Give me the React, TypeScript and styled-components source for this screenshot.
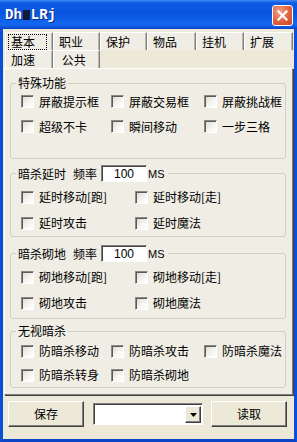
import React from 'react'
import styled, { createGlobalStyle } from 'styled-components'

const GlobalStyle = createGlobalStyle`
  html, body {
    margin: 0;
    padding: 0;
    background: #ece9d8;
  }
  body {
    font-family: 'Noto Sans CJK SC', 'Noto Sans', sans-serif;
    font-size: 12px;
    color: #000;
  }
`

const Window = styled.div`
  width: 297px;
  height: 442px;
  display: flex;
  flex-direction: column;
  overflow: hidden;
`

const TitleBar = styled.div`
  height: 29px;
  flex: none;
  display: flex;
  align-items: center;
  justify-content: space-between;
  padding: 0 4px 0 5px;
  box-sizing: border-box;
  background: linear-gradient(
    to bottom,
    #3d8bf5 0%,
    #0f5ae3 10%,
    #0a55e0 45%,
    #1468ef 85%,
    #0c52d8 95%,
    #0841c4 100%
  );
`

const Title = styled.span`
  font-family: 'Liberation Mono', 'DejaVu Sans Mono', monospace;
  font-weight: bold;
  font-size: 14px;
  color: #fff;
  text-shadow: 1px 1px #0a2a8a;
  display: flex;
  align-items: center;
`

const Redacted = styled.span`
  display: inline-block;
  width: 7px;
  height: 10px;
  margin: 0 1px;
  background: #111a3a;
`

const CloseButton = styled.div`
  width: 21px;
  height: 21px;
  box-sizing: border-box;
  border: 1px solid #fff;
  border-radius: 3px;
  background: radial-gradient(circle at 35% 30%, #f2a288 0%, #e1603e 55%, #c84520 100%);
  display: flex;
  align-items: center;
  justify-content: center;
  margin-top: 1px;
`

const Frame = styled.div`
  flex: 1;
  display: flex;
  flex-direction: column;
  background: #ece9d8;
  border-left: 3px solid #0b4fd8;
  border-right: 3px solid #0b4fd8;
  border-bottom: 3px solid #0b45c8;
  padding: 3px 0 0 1px;
`

const TabRow = styled.div<{ $cols: string }>`
  display: grid;
  grid-template-columns: ${(p) => p.$cols};
  height: 18px;
  margin-left: 1px;
`

const Tab = styled.div<{ $focus?: boolean }>`
  box-sizing: border-box;
  border-top: 1px solid #fff;
  border-left: 1px solid #fff;
  border-right: 1px solid #808080;
  box-shadow: inset -1px 0 #b8b6a8;
  background: #efede4;
  display: flex;
  align-items: center;
  padding-left: ${(p) => (p.$focus ? '2px' : '5px')};
  line-height: 12px;
`

const FocusRect = styled.span`
  border: 1px dotted #000;
  padding: 1px 3px 1px 2px;
  width: 39px;
  box-sizing: border-box;
`

const Panel = styled.div`
  box-sizing: border-box;
  width: 289px;
  background: #efede4;
  border-top: 1px solid #fff;
  border-left: 1px solid #fff;
  border-right: 1px solid #808080;
  border-bottom: 1px solid #808080;
  box-shadow: 1px 1px #404040;
  padding: 8px 6px 6px 5px;
  display: flex;
  flex-direction: column;
`

const Group = styled.fieldset<{ $gap: number; $pt: number; $pb: number }>`
  margin: ${(p) => p.$gap}px 0 0 0;
  padding: ${(p) => p.$pt}px 0 ${(p) => p.$pb}px 0;
  border: 1px solid #d0d0bf;
  border-radius: 3px;
  min-width: 0;
`

const Legend = styled.legend`
  margin-left: 5px;
  padding: 0 2px;
  line-height: 12px;
`

const LegendRow = styled.span`
  display: inline-flex;
  align-items: center;
`

const Spacer = styled.span`
  width: 7px;
`

const FreqInput = styled.span`
  width: 46px;
  height: 17px;
  box-sizing: border-box;
  margin: 0 1px 0 4px;
  background: #fff;
  border-top: 1px solid #808080;
  border-left: 1px solid #808080;
  border-right: 1px solid #fff;
  border-bottom: 1px solid #fff;
  box-shadow: inset 1px 1px #404040;
  display: flex;
  align-items: center;
  justify-content: center;
  font-family: 'Liberation Sans', sans-serif;
  font-size: 12px;
`

const Ms = styled.span`
  font-family: 'Liberation Sans', sans-serif;
  font-size: 11px;
  padding-right: 1px;
`

const CheckGrid = styled.div<{ $cols: string; $row: number }>`
  display: grid;
  grid-template-columns: ${(p) => p.$cols};
  grid-auto-rows: ${(p) => p.$row}px;
  padding-left: 10px;
`

const CheckItem = styled.label`
  display: flex;
  align-items: center;
  gap: 5px;
  white-space: nowrap;
  line-height: 12px;
`

const Box = styled.span`
  flex: none;
  width: 13px;
  height: 13px;
  box-sizing: border-box;
  border-top: 1px solid #8a8a84;
  border-left: 1px solid #8a8a84;
  border-right: 1px solid #fff;
  border-bottom: 1px solid #fff;
  box-shadow: inset 1px 1px #5a5a5a;
  background: linear-gradient(135deg, #dcd9ce 0%, #f4f3ee 55%, #fff 100%);
`

const Footer = styled.div`
  display: flex;
  align-items: center;
  padding: 6px 0 0 4px;
`

const Button = styled.div`
  width: 76px;
  height: 26px;
  box-sizing: border-box;
  background: #ece9d8;
  border-top: 1px solid #fff;
  border-left: 1px solid #fff;
  border-right: 1px solid #404040;
  border-bottom: 1px solid #404040;
  box-shadow: inset -1px -1px #808080;
  display: flex;
  align-items: center;
  justify-content: center;
  line-height: 12px;
`

const Combo = styled.div`
  width: 110px;
  height: 22px;
  box-sizing: border-box;
  margin: 0 8px 0 9px;
  background: #fff;
  border-top: 1px solid #808080;
  border-left: 1px solid #808080;
  border-right: 1px solid #fff;
  border-bottom: 1px solid #fff;
  box-shadow: inset 1px 1px #404040;
  display: flex;
  justify-content: flex-end;
  padding: 2px 1px 1px 2px;
`

const ComboArrow = styled.div`
  width: 16px;
  height: 17px;
  box-sizing: border-box;
  background: #ece9d8;
  border-top: 1px solid #fff;
  border-left: 1px solid #fff;
  border-right: 1px solid #404040;
  border-bottom: 1px solid #404040;
  box-shadow: inset -1px -1px #808080;
  display: flex;
  align-items: center;
  justify-content: center;
`

const Checks = ({ items, cols, row }: { items: string[]; cols: string; row: number }) => (
  <CheckGrid $cols={cols} $row={row}>
    {items.map((t) => (
      <CheckItem key={t}>
        <Box />
        <span>{t}</span>
      </CheckItem>
    ))}
  </CheckGrid>
)

const FreqLegend = ({ title }: { title: string }) => (
  <Legend>
    <LegendRow>
      <span>{title}</span>
      <Spacer />
      <span>频率</span>
      <FreqInput>100</FreqInput>
      <Ms>MS</Ms>
    </LegendRow>
  </Legend>
)

export default function App() {
  return (
    <>
      <GlobalStyle />
      <Window>
        <TitleBar>
          <Title>
            Dh<Redacted />LRj
          </Title>
          <CloseButton>
            <svg width="11" height="11" viewBox="0 0 11 11">
              <path d="M1.5 1.5 L9.5 9.5 M9.5 1.5 L1.5 9.5" stroke="#fff" strokeWidth="2.2" strokeLinecap="square" />
            </svg>
          </CloseButton>
        </TitleBar>
        <Frame>
          <TabRow $cols="48px 47px 47px 49px 48px 49px">
            <Tab $focus>
              <FocusRect>基本</FocusRect>
            </Tab>
            <Tab>职业</Tab>
            <Tab>保护</Tab>
            <Tab>物品</Tab>
            <Tab>挂机</Tab>
            <Tab>扩展</Tab>
          </TabRow>
          <TabRow $cols="48px 47px">
            <Tab>加速</Tab>
            <Tab>&nbsp;公共</Tab>
          </TabRow>
          <Panel>
            <Group $gap={0} $pt={0} $pb={19}>
              <Legend>特殊功能</Legend>
              <Checks
                cols="90px 93px auto"
                row={25}
                items={['屏蔽提示框', '屏蔽交易框', '屏蔽挑战框', '超级不卡', '瞬间移动', '一步三格']}
              />
            </Group>
            <Group $gap={6} $pt={2} $pb={0}>
              <FreqLegend title="暗杀延时" />
              <Checks
                cols="114px auto"
                row={26}
                items={['延时移动[跑]', '延时移动[走]', '延时攻击', '延时魔法']}
              />
            </Group>
            <Group $gap={8} $pt={2} $pb={2}>
              <FreqLegend title="暗杀砌地" />
              <Checks
                cols="114px auto"
                row={26}
                items={['砌地移动[跑]', '砌地移动[走]', '砌地攻击', '砌地魔法']}
              />
            </Group>
            <Group $gap={6} $pt={2} $pb={0}>
              <Legend>无视暗杀</Legend>
              <Checks
                cols="90px 93px auto"
                row={24}
                items={['防暗杀移动', '防暗杀攻击', '防暗杀魔法', '防暗杀转身', '防暗杀砌地']}
              />
            </Group>
          </Panel>
          <Footer>
            <Button>保存</Button>
            <Combo>
              <ComboArrow>
                <svg width="7" height="4" viewBox="0 0 7 4">
                  <path d="M0 0 H7 L3.5 4 Z" fill="#000" />
                </svg>
              </ComboArrow>
            </Combo>
            <Button>读取</Button>
          </Footer>
        </Frame>
      </Window>
    </>
  )
}
